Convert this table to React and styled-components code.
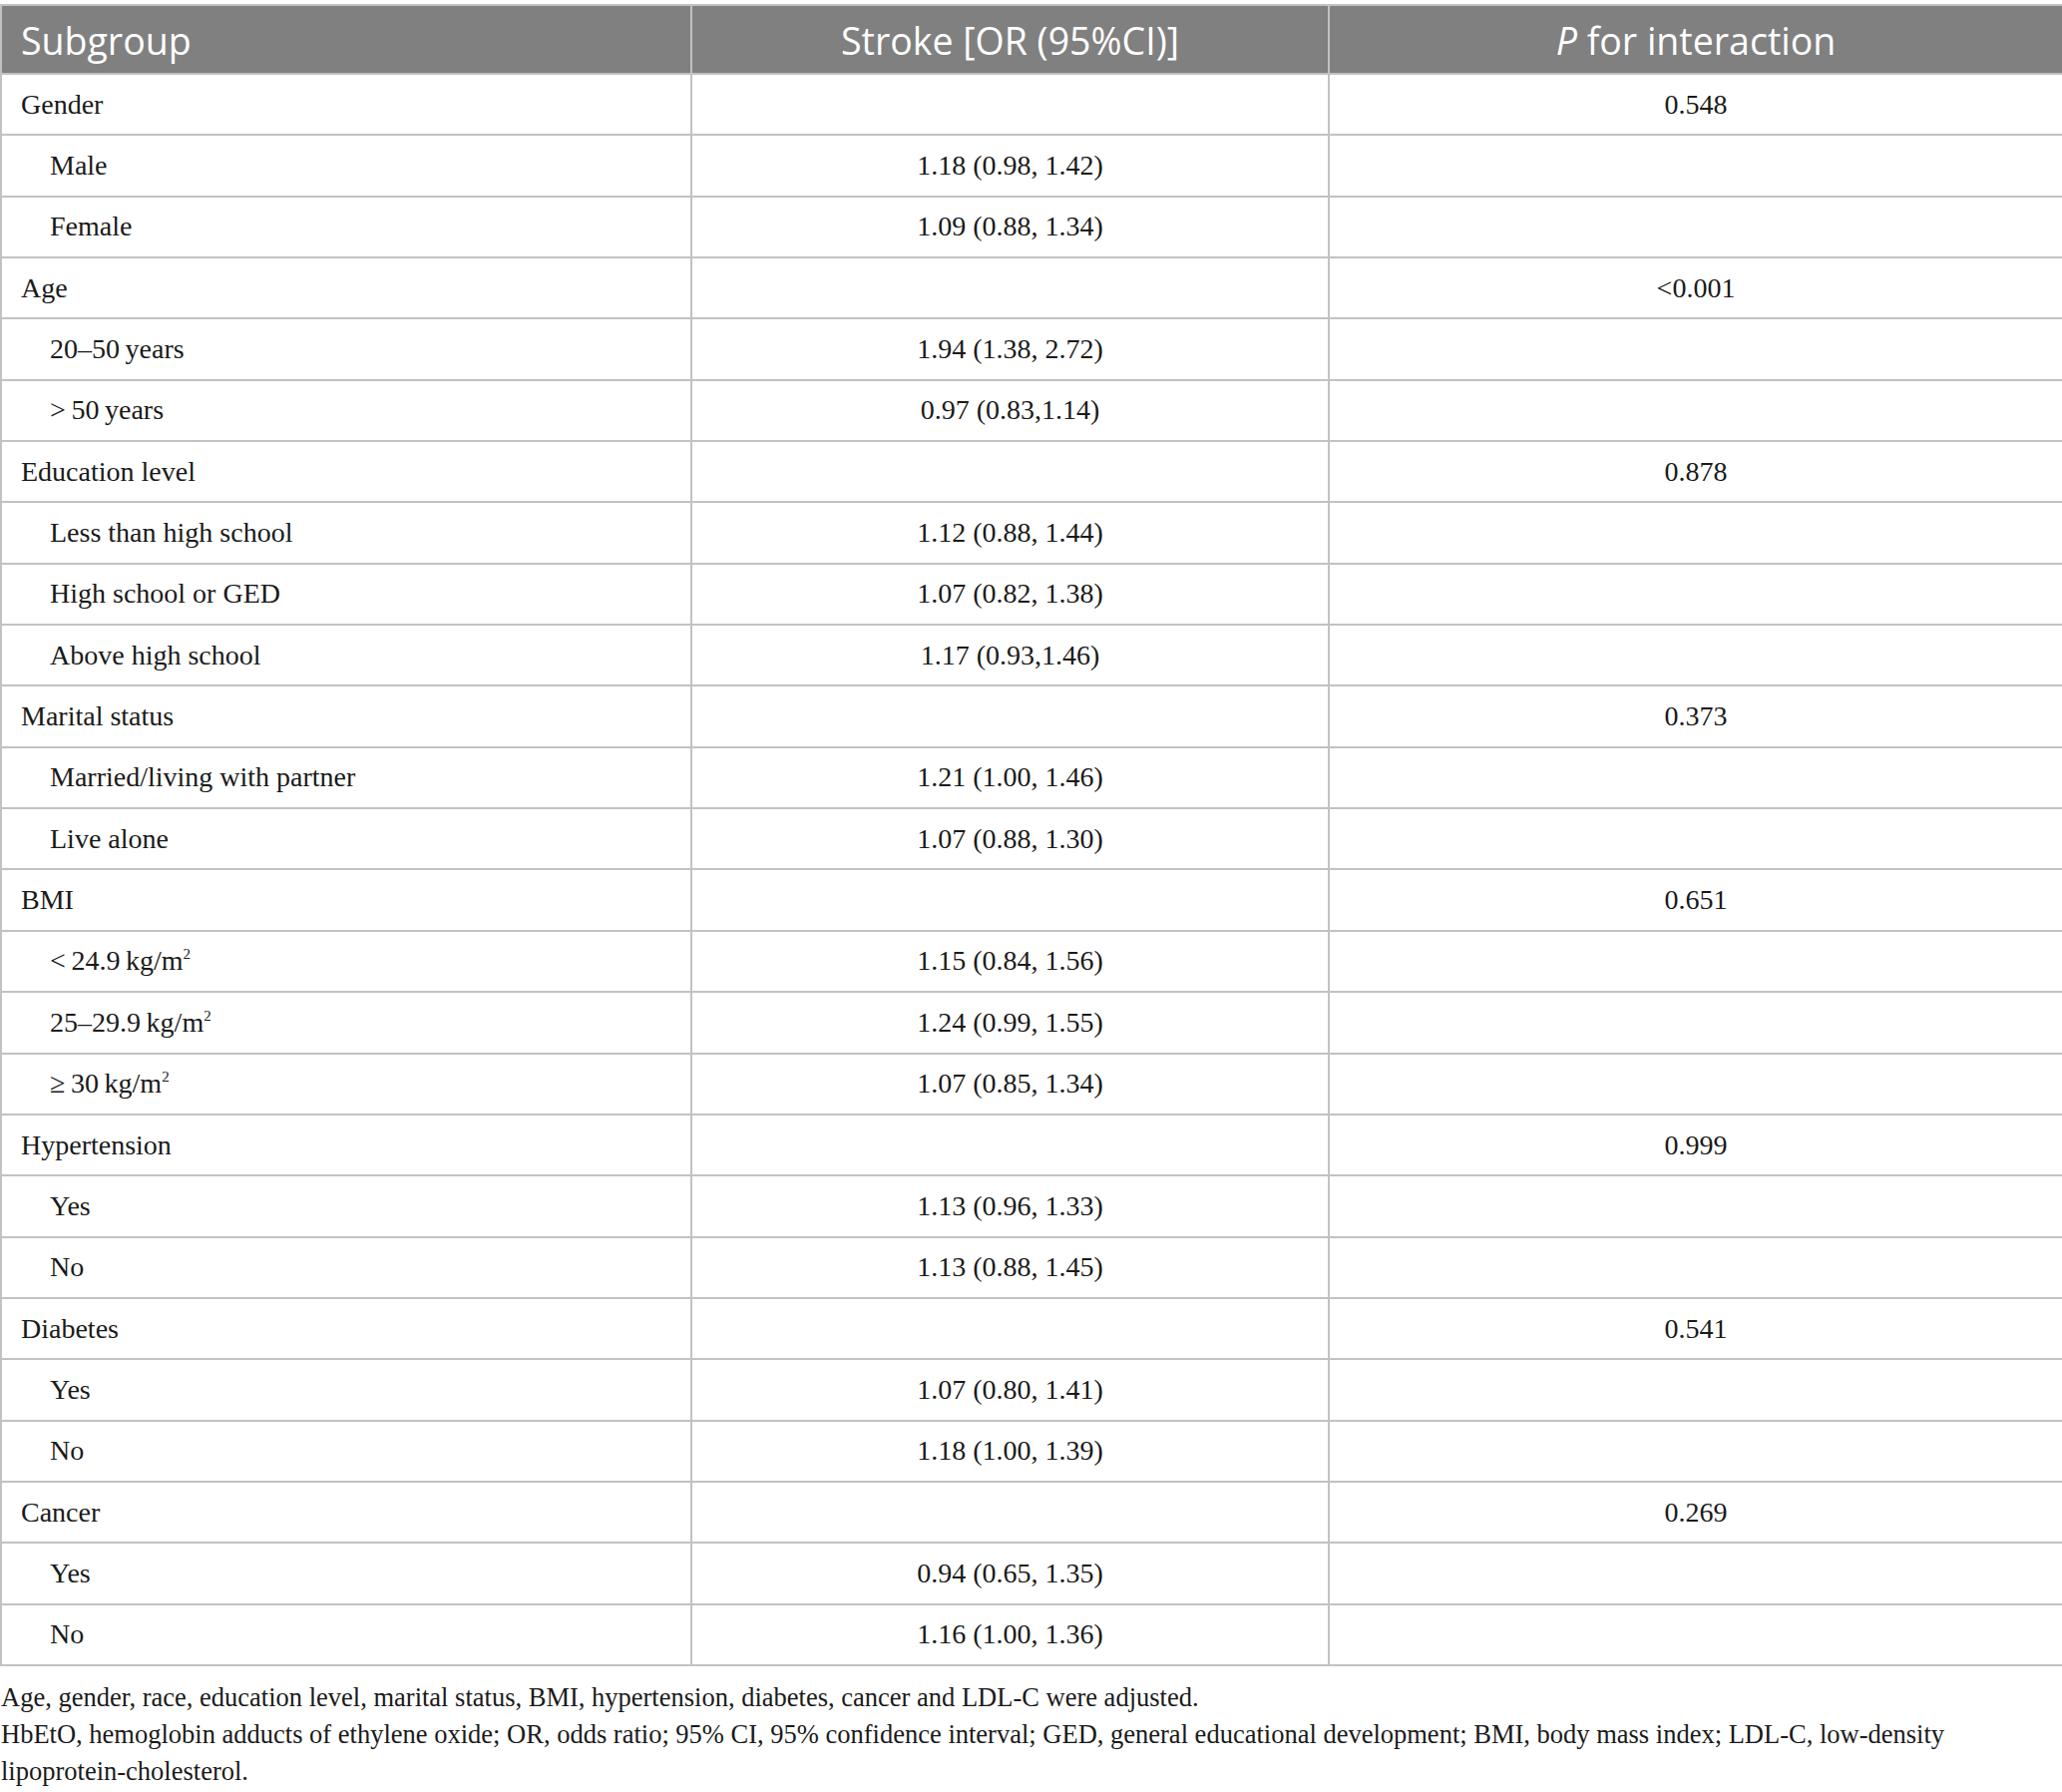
import React from "react";
import styled, { createGlobalStyle } from "styled-components";

const Global = createGlobalStyle`
  html, body { margin: 0; padding: 0; background: #ffffff; }
  body { font-family: "Liberation Serif", "Times New Roman", serif; color: #1a1a1a; }
`;

const Page = styled.div`
  width: 2067px;
  padding-top: 4px;
  box-sizing: border-box;
`;

const Table = styled.table`
  width: 2067px;
  border-collapse: collapse;
  table-layout: fixed;
  border: 2px solid #c2c2c2;
`;

const HeadRow = styled.tr`
  height: 69px;
  background: #808080;
`;

const HeadCell = styled.th`
  font-family: "Open Sans", "Noto Sans", sans-serif;
  font-weight: 400;
  font-size: 37.5px;
  color: #ffffff;
  text-align: ${(p) => (p.$left ? "left" : "center")};
  padding: 2px 0 0 ${(p) => (p.$left ? "19px" : "0")};
  border: 2px solid #c2c2c2;
  white-space: nowrap;
  em { font-style: italic; }
`;

const Row = styled.tr`
  height: 61.35px;
`;

const Cell = styled.td`
  font-size: 28px;
  color: #1a1a1a;
  text-align: ${(p) => (p.$center ? "center" : "left")};
  padding: 0 0 0 ${(p) => (p.$indent ? "48px" : p.$center ? "0" : "19px")};
  border: 2px solid #c2c2c2;
  white-space: nowrap;
  sup { font-size: 15px; vertical-align: 11px; line-height: 0; }
`;

const Notes = styled.div`
  margin-top: 13px;
  font-size: 26.5px;
  line-height: 37px;
  color: #1a1a1a;
  padding-left: 1px;
`;

const NoteLine = styled.div`
  white-space: nowrap;
`;

const T = "\u2009";

const rows = [
  { label: "Gender", p: "0.548" },
  { label: "Male", sub: true, or: "1.18 (0.98, 1.42)" },
  { label: "Female", sub: true, or: "1.09 (0.88, 1.34)" },
  { label: "Age", p: "<0.001" },
  { label: `20–50${T}years`, sub: true, or: "1.94 (1.38, 2.72)" },
  { label: `>${T}50${T}years`, sub: true, or: "0.97 (0.83,1.14)" },
  { label: "Education level", p: "0.878" },
  { label: "Less than high school", sub: true, or: "1.12 (0.88, 1.44)" },
  { label: "High school or GED", sub: true, or: "1.07 (0.82, 1.38)" },
  { label: "Above high school", sub: true, or: "1.17 (0.93,1.46)" },
  { label: "Marital status", p: "0.373" },
  { label: "Married/living with partner", sub: true, or: "1.21 (1.00, 1.46)" },
  { label: "Live alone", sub: true, or: "1.07 (0.88, 1.30)" },
  { label: "BMI", p: "0.651" },
  { label: `<${T}24.9${T}kg/m`, sq: true, sub: true, or: "1.15 (0.84, 1.56)" },
  { label: `25–29.9${T}kg/m`, sq: true, sub: true, or: "1.24 (0.99, 1.55)" },
  { label: `≥${T}30${T}kg/m`, sq: true, sub: true, or: "1.07 (0.85, 1.34)" },
  { label: "Hypertension", p: "0.999" },
  { label: "Yes", sub: true, or: "1.13 (0.96, 1.33)" },
  { label: "No", sub: true, or: "1.13 (0.88, 1.45)" },
  { label: "Diabetes", p: "0.541" },
  { label: "Yes", sub: true, or: "1.07 (0.80, 1.41)" },
  { label: "No", sub: true, or: "1.18 (1.00, 1.39)" },
  { label: "Cancer", p: "0.269" },
  { label: "Yes", sub: true, or: "0.94 (0.65, 1.35)" },
  { label: "No", sub: true, or: "1.16 (1.00, 1.36)" },
];

export default function App() {
  return (
    <Page>
      <Global />
      <Table>
        <colgroup>
          <col style={{ width: "692px" }} />
          <col style={{ width: "639px" }} />
          <col style={{ width: "736px" }} />
        </colgroup>
        <thead>
          <HeadRow>
            <HeadCell $left>Subgroup</HeadCell>
            <HeadCell>Stroke [OR (95%CI)]</HeadCell>
            <HeadCell>
              <em>P</em> for interaction
            </HeadCell>
          </HeadRow>
        </thead>
        <tbody>
          {rows.map((r, i) => (
            <Row key={i}>
              <Cell $indent={r.sub}>
                {r.label}
                {r.sq && <sup>2</sup>}
              </Cell>
              <Cell $center>{r.or || ""}</Cell>
              <Cell $center>{r.p || ""}</Cell>
            </Row>
          ))}
        </tbody>
      </Table>
      <Notes>
        <NoteLine>
          Age, gender, race, education level, marital status, BMI, hypertension, diabetes, cancer and LDL-C were adjusted.
        </NoteLine>
        <NoteLine>
          HbEtO, hemoglobin adducts of ethylene oxide; OR, odds ratio; 95% CI, 95% confidence interval; GED, general educational development; BMI, body mass index; LDL-C, low-density
        </NoteLine>
        <NoteLine>lipoprotein-cholesterol.</NoteLine>
      </Notes>
    </Page>
  );
}
